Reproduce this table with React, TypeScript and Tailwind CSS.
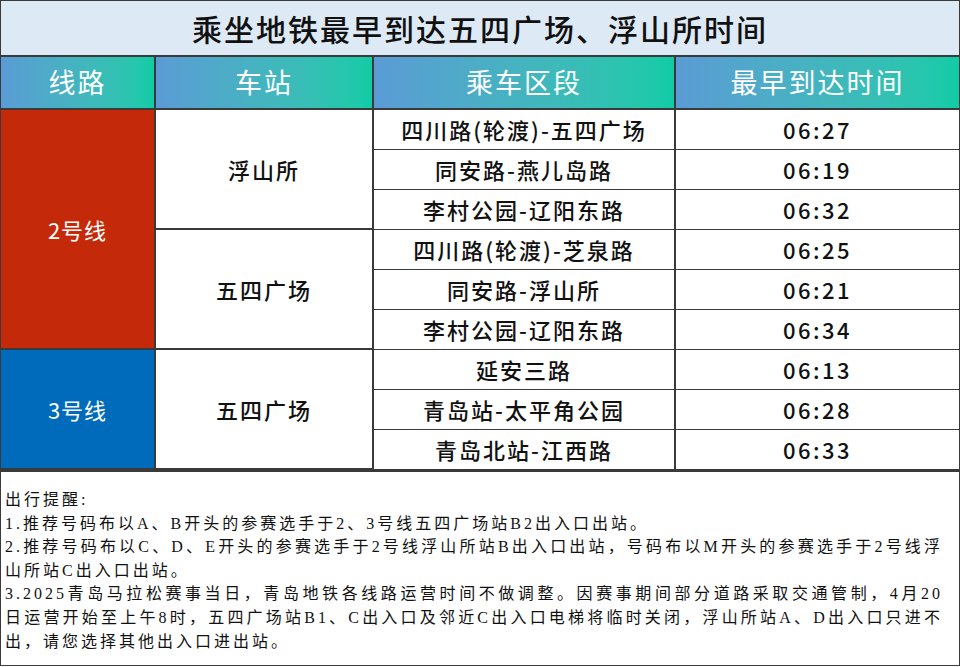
const rows = [
  { seg: "四川路(轮渡)-五四广场", time: "06:27" },
  { seg: "同安路-燕儿岛路", time: "06:19" },
  { seg: "李村公园-辽阳东路", time: "06:32" },
  { seg: "四川路(轮渡)-芝泉路", time: "06:25" },
  { seg: "同安路-浮山所", time: "06:21" },
  { seg: "李村公园-辽阳东路", time: "06:34" },
  { seg: "延安三路", time: "06:13" },
  { seg: "青岛站-太平角公园", time: "06:28" },
  { seg: "青岛北站-江西路", time: "06:33" },
];

const notes: { text: string; fill?: boolean }[] = [
  { text: "出行提醒:" },
  { text: "1.推荐号码布以A、B开头的参赛选手于2、3号线五四广场站B2出入口出站。" },
  {
    text: "2.推荐号码布以C、D、E开头的参赛选手于2号线浮山所站B出入口出站，号码布以M开头的参赛选手于2号线浮",
    fill: true,
  },
  { text: "山所站C出入口出站。" },
  {
    text: "3.2025青岛马拉松赛事当日，青岛地铁各线路运营时间不做调整。因赛事期间部分道路采取交通管制，4月20",
    fill: true,
  },
  {
    text: "日运营开始至上午8时，五四广场站B1、C出入口及邻近C出入口电梯将临时关闭，浮山所站A、D出入口只进不",
    fill: true,
  },
  { text: "出，请您选择其他出入口进出站。" },
];

const cell = "border-2 border-[#3a3a3a] text-center align-middle";
const head =
  "border-2 border-[#3a3a3a] bg-linear-to-r from-[#5a9bd5] to-[#10cca6] text-center align-middle text-[27px] tracking-[2px] text-white";

export default function App() {
  return (
    <div className="h-[667px] w-[960px] bg-white font-['Noto_Sans_CJK_SC',sans-serif] text-[#111]">
      <div className="h-[666px] w-[960px] overflow-hidden border border-[#3a3a3a]">
        <table className="w-[958px] table-fixed border-collapse">
          <colgroup>
            <col className="w-[154px]" />
            <col className="w-[218px]" />
            <col className="w-[302px]" />
            <col />
          </colgroup>
          <tbody>
            <tr className="h-[55px]">
              <td
                colSpan={4}
                className="border-x-0 border-t-0 border-b-2 border-[#3a3a3a] bg-[#ddeaf6] text-center align-middle text-[30px] font-medium tracking-[2px]"
              >
                乘坐地铁最早到达五四广场、浮山所时间
              </td>
            </tr>
            <tr className="h-[53px]">
              <td className={head + " border-l-0"}>线路</td>
              <td className={head}>车站</td>
              <td className={head}>乘车区段</td>
              <td className={head + " border-r-0"}>最早到达时间</td>
            </tr>
            {rows.map((r, i) => (
              <tr key={i} className="h-[40px]">
                {i === 0 && (
                  <td
                    rowSpan={6}
                    className={cell + " border-l-0 bg-[#c4290a] text-[22px] tracking-[1px] text-white"}
                  >
                    2号线
                  </td>
                )}
                {i === 6 && (
                  <td
                    rowSpan={3}
                    className={cell + " border-l-0 bg-[#006bbb] text-[22px] tracking-[1px] text-white"}
                  >
                    3号线
                  </td>
                )}
                {i % 3 === 0 && (
                  <td rowSpan={3} className={cell + " text-[22px] font-medium tracking-[2px]"}>
                    {i === 0 ? "浮山所" : "五四广场"}
                  </td>
                )}
                <td className="border-x-2 border-y border-[#3a3a3a] text-center align-middle text-[22px] font-medium tracking-[2px]">
                  {r.seg}
                </td>
                <td className="border-y border-r-0 border-[#3a3a3a] text-center align-middle text-[22px] font-medium tracking-[2.5px]">
                  {r.time}
                </td>
              </tr>
            ))}
          </tbody>
        </table>
        <div className="border-t-2 border-[#3a3a3a] pt-[16px] pl-[4px] pr-[16px] font-['Liberation_Serif','Noto_Sans_CJK_SC',serif] text-[16px] leading-[23.6px] tracking-[3px] text-[#111]">
          {notes.map((n, i) => (
            <div
              key={i}
              className={
                n.fill
                  ? "h-[23.6px] whitespace-nowrap text-justify [text-align-last:justify]"
                  : "h-[23.6px] whitespace-nowrap"
              }
            >
              {n.text}
            </div>
          ))}
        </div>
      </div>
    </div>
  );
}
